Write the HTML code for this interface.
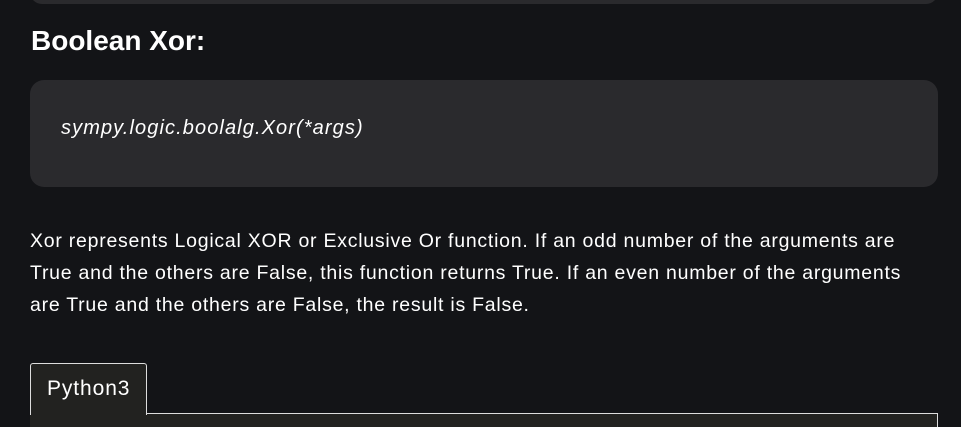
<!DOCTYPE html>
<html><head><style>
html,body{margin:0;width:961px;height:427px;overflow:hidden}
body{background:#131417;font-family:"Liberation Sans",sans-serif;color:#fff;position:relative}
.top{position:absolute;left:30px;top:-20px;width:908px;height:24px;background:#2a2a2d;border-radius:12px}
h2{position:absolute;left:31px;top:25px;margin:0;font-size:28px;font-weight:bold;letter-spacing:0px}
.code{position:absolute;left:30px;top:80px;width:908px;height:107px;background:#2a2a2d;border-radius:14px}
.code span{position:absolute;left:31px;top:37px;font-style:italic;font-size:20px;letter-spacing:1.1px}
p{position:absolute;left:30px;top:225px;margin:0;white-space:nowrap;font-size:19.5px;line-height:32px;letter-spacing:0.75px}
.tab{position:absolute;left:30px;top:363px;width:115px;height:51px;background:#222220;border:1px solid #ddd;border-bottom:none;border-radius:3px 3px 0 0;z-index:2}
.tab span{position:absolute;left:16px;top:13px;font-size:21px;letter-spacing:0.9px}
.pane{position:absolute;left:30px;top:413px;width:907px;height:14px;background:#222220;border-top:1px solid #ddd;border-right:1px solid #ddd}
</style></head><body>
<div class="top"></div>
<h2>Boolean Xor:</h2>
<div class="code"><span>sympy.logic.boolalg.Xor(*args)</span></div>
<p>Xor represents Logical XOR or Exclusive Or function. If an odd number of the arguments are<br>True and the others are False, this function returns True. If an even number of the arguments<br>are True and the others are False, the result is False.</p>
<div class="pane"></div>
<div class="tab"><span>Python3</span></div>
</body></html>
